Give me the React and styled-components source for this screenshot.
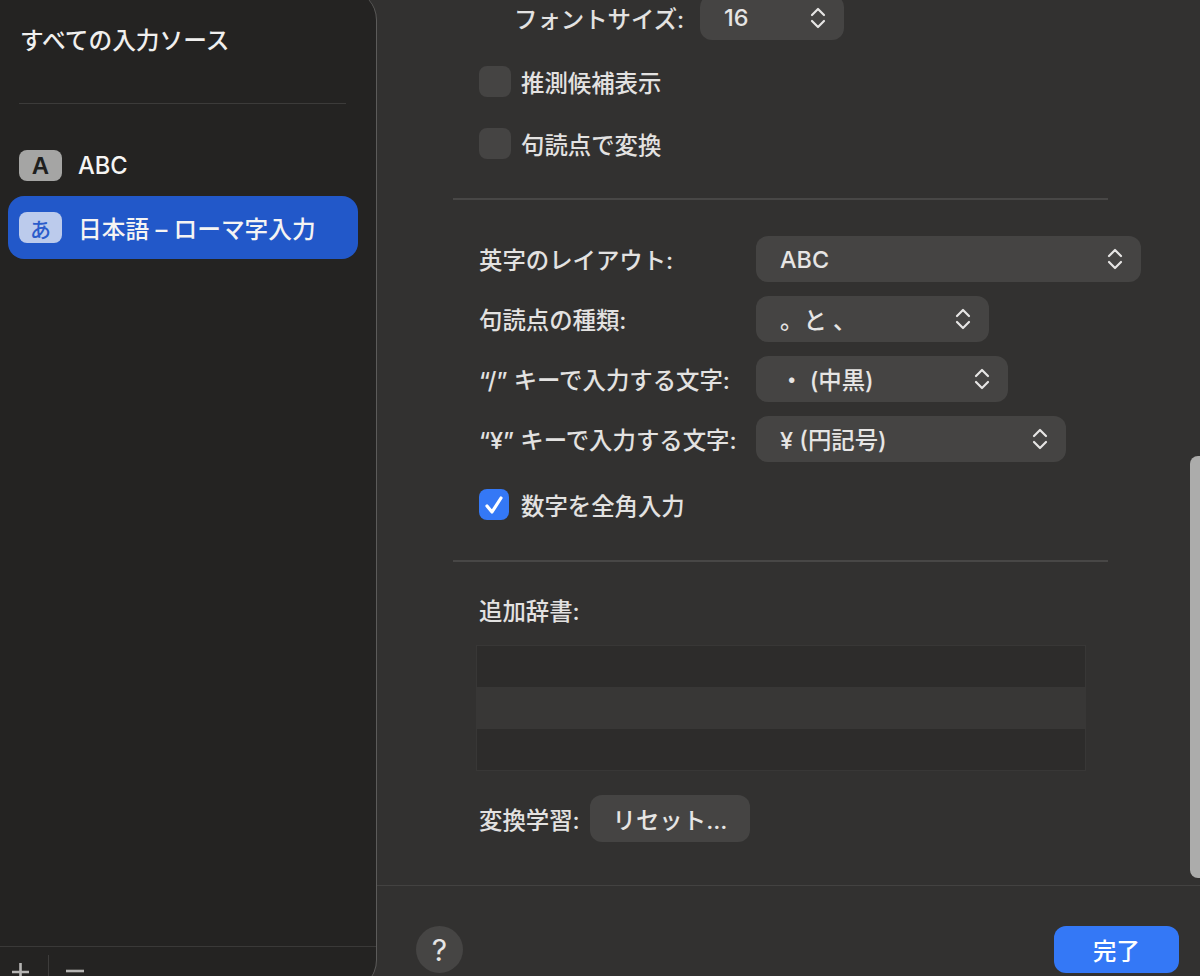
import React from 'react'
import styled, { createGlobalStyle } from 'styled-components'

const GlobalStyle = createGlobalStyle`
    html, body {
        margin : 0;
        padding : 0;
        background : #323130;
    }
    * {
        box-sizing : border-box;
    }
    body {
        font-family : Inter, "Noto Sans CJK JP", sans-serif;
        font-size : 23.4px;
        font-weight : 500;
        color : #e3e2e1;
    }
`;

const Window = styled.div`
    display : flex;
    width : 1200px;
    height : 976px;
    overflow : hidden;
    background : #323130;
`;

const Sidebar = styled.aside`
    display : flex;
    flex-direction : column;
    flex : none;
    width : 377px;
    height : 1000px;
    margin-top : -10px;
    padding-top : 35px;
    background : #242322;
    border-right : 1.5px solid #5c5b5a;
    border-radius : 0 30px 30px 0;
    font-size : 23.7px;
`;

const SidebarTitle = styled.div`
    height : 32px;
    padding-left : 20px;
    line-height : 32px;
    color : #f0efee;
`;

const SidebarRule = styled.div`
    height : 1px;
    margin : 46px 30px 0 19px;
    background : #3c3b3a;
`;

const SourceList = styled.div`
    flex : 1;
    margin-top : 31px;
    padding : 0 18px 0 8px;
`;

const Source = styled.div`
    display : flex;
    align-items : center;
    gap : 16px;
    height : ${({ $selected }) => ($selected ? '63px' : '61px')};
    padding-left : 11px;
    border-radius : 16px;
    background : ${({ $selected }) => ($selected ? '#2258c9' : 'transparent')};
    color : #f5f4f3;
`;

const Badge = styled.span`
    display : flex;
    align-items : center;
    justify-content : center;
    width : 43px;
    height : 31px;
    border-radius : 8px;
    background : ${({ $selected }) => ($selected ? '#bccbec' : '#a5a5a4')};
    color : ${({ $selected }) => ($selected ? '#2b5ccb' : '#1f1f1e')};
    font-size : ${({ $selected }) => ($selected ? '21px' : '24px')};
    font-weight : ${({ $selected }) => ($selected ? 500 : 700)};
    font-family : ${({ $selected }) => ($selected ? '"Noto Sans CJK JP"' : '"Liberation Sans"')}, sans-serif;
`;

const SidebarFooter = styled.div`
    display : flex;
    align-items : flex-start;
    flex : none;
    height : 44px;
    border-top : 1px solid #3a3938;
    padding : 8px 0 0 12px;
`;

const FooterIcon = styled.svg`
    flex : none;
    margin-top : 8px;
`;

const FooterSplit = styled.span`
    width : 1px;
    height : 28px;
    margin : 0 17px 0 19px;
    background : #3d3c3b;
`;

const Main = styled.main`
    position : relative;
    display : flex;
    flex-direction : column;
    flex : 1;
    min-width : 0;
`;

const Content = styled.div`
    flex : none;
    height : 885px;
    padding-left : 76px;
`;

const FontRow = styled.div`
    display : flex;
    align-items : center;
    gap : 17px;
    margin-top : -5px;
    padding-left : 61px;
`;

const FontLabel = styled.span`
    width : 169px;
    white-space : nowrap;
`;

const Select = styled.div`
    display : flex;
    align-items : center;
    justify-content : space-between;
    width : ${({ $width }) => $width}px;
    height : ${({ $height }) => $height || 46}px;
    padding : 0 18px 0 24px;
    border-radius : 12px;
    background : #454443;
    color : #e6e5e4;
    white-space : pre;
`;

const CheckRow = styled.label`
    display : flex;
    align-items : center;
    gap : ${({ $checked }) => ($checked ? '12px' : '10px')};
    height : 31px;
    margin-top : ${({ $top }) => $top}px;
    margin-left : 26px;
`;

const Box = styled.span`
    display : flex;
    align-items : center;
    justify-content : center;
    width : ${({ $checked }) => ($checked ? '30px' : '32px')};
    height : 31px;
    border-radius : 8px;
    background : ${({ $checked }) => ($checked ? '#3478f6' : '#454443')};
`;

const Rule = styled.div`
    width : 655px;
    height : 2px;
    margin-top : ${({ $top }) => $top}px;
    background : #484746;
`;

const FormGrid = styled.div`
    display : grid;
    grid-template-columns : 277px auto;
    justify-content : start;
    align-items : center;
    row-gap : 14px;
    margin-top : 36px;
    padding-left : 26px;
`;

const FieldLabel = styled.span`
    white-space : nowrap;
`;

const DictLabel = styled.div`
    height : 32px;
    margin : 34px 0 0 26px;
    line-height : 32px;
`;

const DictTable = styled.div`
    display : flex;
    flex-direction : column;
    width : 610px;
    height : 126px;
    margin : 17px 0 0 23px;
    border : 1px solid #383736;
`;

const DictRow = styled.div`
    flex : 1;
    background : ${({ $odd }) => ($odd ? '#383736' : '#2d2c2b')};
`;

const ResetRow = styled.div`
    display : flex;
    align-items : center;
    gap : 10px;
    margin : 24px 0 0 26px;
`;

const ResetLabel = styled.span`
    width : 101px;
    white-space : nowrap;
`;

const Button = styled.button`
    display : flex;
    align-items : center;
    justify-content : center;
    height : 47px;
    width : ${({ $width }) => $width}px;
    padding : 0;
    border : none;
    border-radius : 12px;
    background : ${({ $primary }) => ($primary ? '#3478f6' : '#454443')};
    color : ${({ $primary }) => ($primary ? '#ffffff' : '#e6e5e4')};
    font : inherit;
`;

const Footer = styled.footer`
    display : flex;
    align-items : flex-start;
    justify-content : space-between;
    flex : 1;
    padding : 40px 21px 0 39px;
    border-top : 1px solid #434241;
`;

const HelpButton = styled.button`
    width : 47px;
    height : 47px;
    padding : 0;
    border : none;
    border-radius : 50%;
    background : #464544;
    color : #e6e5e4;
    font : inherit;
    font-size : 30px;
    font-weight : 400;
`;

const Scrollbar = styled.div`
    position : absolute;
    top : 456px;
    right : 0;
    width : 10px;
    height : 422px;
    border-radius : 8px 0 0 8px;
    background : #acacab;
`;

const Updown = () => (
    <svg width="16" height="24" viewBox="0 0 16 24" fill="none" stroke="#e6e5e4" strokeWidth="2.2" strokeLinecap="round" strokeLinejoin="round">
        <path d="M2 9 L8 3 L14 9" />
        <path d="M2 15 L8 21 L14 15" />
    </svg>
);

const fields = [
    { label: '英字のレイアウト:', value: 'ABC', width: 385 },
    { label: '句読点の種類:', value: '。と 、', width: 233 },
    { label: '“/” キーで入力する文字:', value: '・ (中黒)', width: 252 },
    { label: '“¥” キーで入力する文字:', value: '¥ (円記号)', width: 310 },
];

const App = () => {
    return (
        <Window>
            <GlobalStyle />
            <Sidebar>
                <SidebarTitle>すべての入力ソース</SidebarTitle>
                <SidebarRule />
                <SourceList>
                    <Source>
                        <Badge>A</Badge>
                        ABC
                    </Source>
                    <Source $selected>
                        <Badge $selected>あ</Badge>
                        日本語 – ローマ字入力
                    </Source>
                </SourceList>
                <SidebarFooter>
                    <FooterIcon width="17" height="18" viewBox="0 0 17 18" stroke="#b5b4b3" strokeWidth="2.6">
                        <path d="M0 9 H17 M8.5 0 V18" />
                    </FooterIcon>
                    <FooterSplit />
                    <FooterIcon width="18" height="18" viewBox="0 0 18 18" stroke="#b5b4b3" strokeWidth="2.6">
                        <path d="M0 8 H18" />
                    </FooterIcon>
                </SidebarFooter>
            </Sidebar>
            <Main>
                <Content>
                    <FontRow>
                        <FontLabel>フォントサイズ:</FontLabel>
                        <Select $width={144} $height={45}>
                            16
                            <Updown />
                        </Select>
                    </FontRow>
                    <CheckRow $top={26}>
                        <Box />
                        推測候補表示
                    </CheckRow>
                    <CheckRow $top={31}>
                        <Box />
                        句読点で変換
                    </CheckRow>
                    <Rule $top={39} />
                    <FormGrid>
                        {fields.map((field) => (
                            <React.Fragment key={field.label}>
                                <FieldLabel>{field.label}</FieldLabel>
                                <Select $width={field.width}>
                                    {field.value}
                                    <Updown />
                                </Select>
                            </React.Fragment>
                        ))}
                    </FormGrid>
                    <CheckRow $top={27} $checked>
                        <Box $checked>
                            <svg width="22" height="22" viewBox="0 0 22 22" fill="none" stroke="#ffffff" strokeWidth="3.2" strokeLinecap="round" strokeLinejoin="round">
                                <path d="M4 12 L9 18 L18 4" />
                            </svg>
                        </Box>
                        数字を全角入力
                    </CheckRow>
                    <Rule $top={40} />
                    <DictLabel>追加辞書:</DictLabel>
                    <DictTable>
                        <DictRow />
                        <DictRow $odd />
                        <DictRow />
                    </DictTable>
                    <ResetRow>
                        <ResetLabel>変換学習:</ResetLabel>
                        <Button $width={160}>リセット...</Button>
                    </ResetRow>
                </Content>
                <Footer>
                    <HelpButton>?</HelpButton>
                    <Button $primary $width={125}>完了</Button>
                </Footer>
                <Scrollbar />
            </Main>
        </Window>
    )
}

export default App
